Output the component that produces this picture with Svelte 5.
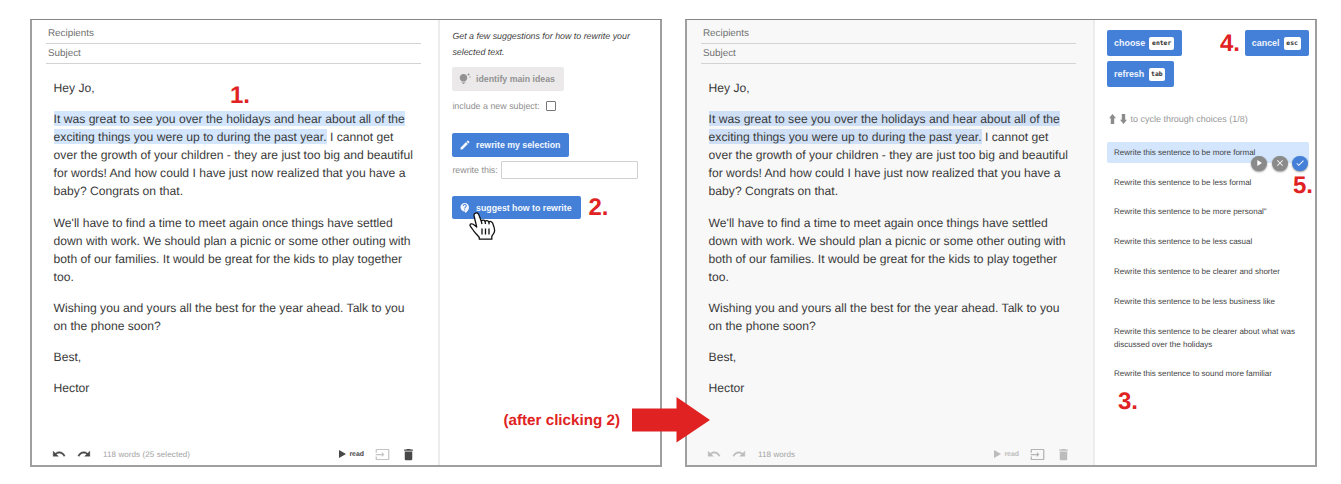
<script>
  const icons = {
    undo: 'M12.5 8c-2.65 0-5.05.99-6.9 2.6L2 7v9h9l-3.62-3.62c1.39-1.16 3.16-1.88 5.12-1.88 3.54 0 6.55 2.31 7.6 5.5l2.37-.78C21.08 11.03 17.15 8 12.5 8z',
    redo: 'M18.4 10.6C16.55 8.99 14.15 8 11.5 8c-4.65 0-8.58 3.03-9.96 7.22L3.9 16c1.05-3.19 4.05-5.5 7.6-5.5 1.95 0 3.73.72 5.12 1.88L13 16h9V7l-3.6 3.6z',
    input: 'M21 3.01H3c-1.1 0-2 .9-2 2V9h2V4.99h18v14.03H3V15H1v4.01c0 1.1.9 1.98 2 1.98h18c1.1 0 2-.88 2-1.98v-14c0-1.11-.9-2-2-2zM11 16l4-4-4-4v3H1v2h10v3z',
    trash: 'M6 19c0 1.1.9 2 2 2h8c1.1 0 2-.9 2-2V7H6v12zM19 4h-3.5l-1-1h-5l-1 1H5v2h14V4z',
    bulb: 'M7 20h4c0 1.1-.9 2-2 2s-2-.9-2-2zm-2-1h8v-2H5v2zm11.500-9.500c0 3.820-2.660 5.860-3.770 6.500H5.270c-1.110-.640-3.770-2.680-3.770-6.500C1.500 5.360 4.860 2 9 2s7.500 3.360 7.500 7.500zm4.870-2.130L20 8l1.370.63L22 10l.63-1.370L24 8l-1.370-.63L22 6l-.63 1.370zM19 6l.94-2.060L22 3l-2.060-.94L19 0l-.94 2.060L16 3l2.060.94L19 6z',
    edit: 'M3 17.250V21h3.750L17.810 9.940l-3.750-3.750L3 17.250zM20.710 7.040c.39-.39.39-1.020 0-1.410l-2.340-2.340c-.39-.39-1.020-.39-1.410 0l-1.830 1.830 3.750 3.750 1.830-1.830z',
    help: 'M11.5 2C6.810 2 3 5.810 3 10.500S6.810 19 11.500 19h.5v3c4.860-2.340 8-7 8-11.500C20 5.810 16.190 2 11.500 2zm1 14.500h-2v-2h2v2zm0-3.500h-2c0-3.250 3-3 3-5 0-1.100-.9-2-2-2s-2 .9-2 2h-2c0-2.210 1.790-4 4-4s4 1.790 4 4c0 2.500-3 2.750-3 5z',
    play: 'M8 5v14l11-7z',
    close: 'M19 6.410L17.590 5 12 10.590 6.410 5 5 6.410 10.590 12 5 17.590 6.410 19 12 13.410 17.590 19 19 17.590 13.410 12z',
    check: 'M9 16.170L4.830 12l-1.420 1.410L9 19 21 7l-1.410-1.410z',
  };

  const paragraphs = [
    ["We'll have to find a time to meet again once things have settled", 'down with work. We should plan a picnic or some other outing with', 'both of our families. It would be great for the kids to play together', 'too.'],
    ['Wishing you and yours all the best for the year ahead. Talk to you', 'on the phone soon?'],
    ['Best,'],
    ['Hector'],
  ];

  const choices = [
    ['Rewrite this sentence to be more formal'],
    ['Rewrite this sentence to be less formal'],
    ['Rewrite this sentence to be more personal"'],
    ['Rewrite this sentence to be less casual'],
    ['Rewrite this sentence to be clearer and shorter'],
    ['Rewrite this sentence to be less business like'],
    ['Rewrite this sentence to be clearer about what was', 'discussed over the holidays'],
    ['Rewrite this sentence to sound more familiar'],
  ];
</script>

{#snippet icon(name, cls)}
  <svg class="icon {cls}" viewBox="0 0 24 24"><path d={icons[name]} /></svg>
{/snippet}

{#snippet editor(locked)}
  <section class="editor" class:locked>
    <div class="field">Recipients</div>
    <div class="field">Subject</div>
    <div class="letter">
      <p>Hey Jo,</p>
      <p>
        <mark>It was great to see you over the holidays and hear about all of the</mark><br />
        <mark>exciting things you were up to during the past year.</mark> I cannot get<br />
        over the growth of your children - they are just too big and beautiful<br />
        for words! And how could I have just now realized that you have a<br />
        baby? Congrats on that.
      </p>
      {#each paragraphs as lines}
        <p>{#each lines as line}<span class="line">{line}</span>{/each}</p>
      {/each}
    </div>
    <footer>
      {@render icon('undo', 'undo')}
      {@render icon('redo', 'redo')}
      <span class="count">{locked ? '118 words' : '118 words (25 selected)'}</span>
      <svg class="tri" viewBox="0 0 7 8"><path d="M0 0L7 4L0 8z" /></svg>
      <span class="read">read</span>
      {@render icon('input', 'insert')}
      {@render icon('trash', 'trash')}
    </footer>
  </section>
{/snippet}

<main>
  <div class="window">
    {@render editor(false)}
    <aside class="tools">
      <p class="hint">Get a few suggestions for how to rewrite your<br />selected text.</p>
      <button class="btn off">{@render icon('bulb', 'lead')}identify main ideas</button>
      <label class="row subject">include a new subject:<span class="box"></span></label>
      <button class="btn edit">{@render icon('edit', 'lead')}rewrite my selection</button>
      <label class="row this">rewrite this:<span class="input"></span></label>
      <button class="btn suggest">{@render icon('help', 'lead')}suggest how to rewrite</button>
    </aside>
  </div>

  <div class="window second">
    {@render editor(true)}
    <aside class="picker">
      <div class="keys">
        <button class="key">choose<kbd>enter</kbd></button>
        <button class="key">cancel<kbd>esc</kbd></button>
      </div>
      <div class="keys"><button class="key">refresh<kbd>tab</kbd></button></div>
      <div class="cycle">
        <svg viewBox="0 0 7 10"><path d="M3.500 0L7 4.300H5.200V10H1.800V4.300H0z" /></svg>
        <svg viewBox="0 0 7 10"><path d="M3.500 10L7 5.700H5.200V0H1.800V5.700H0z" /></svg>
        <span>to cycle through choices (1/8)</span>
      </div>
      <ul>
        {#each choices as lines, i}
          <li class:active={i === 0}>
            {#each lines as line}<span class="line">{line}</span>{/each}
            {#if i === 0}
              <div class="actions">
                <i>{@render icon('play', 'small')}</i>
                <i>{@render icon('close', 'small')}</i>
                <i class="ok">{@render icon('check', 'small')}</i>
              </div>
            {/if}
          </li>
        {/each}
      </ul>
    </aside>
  </div>

  <b class="note n1">1.</b>
  <b class="note n2">2.</b>
  <b class="note n3">3.</b>
  <b class="note n4">4.</b>
  <b class="note n5">5.</b>
  <b class="after">(after clicking 2)</b>
  <svg class="arrow" viewBox="0 0 78 46"><path d="M0 11.500H44.500V0L78 23L44.500 45.500V34.500H0z" /></svg>
  <svg class="hand" viewBox="0 0 27 29">
    <path d="M6.500 1.200C8 .5 9.300 1.300 9.800 2.800L12.300 9.200C13.300 7.800 15.300 7.900 16 9.200C17 8.200 19 8.400 19.800 9.900C21 9 23 9.400 23.600 11C24.800 14 25.800 16.500 25.600 19C25.500 21.500 23.300 22.600 22.800 24.500V27.200H10.300V25.500C8.500 23.200 6.500 21.400 4.700 18.800C3.700 17.200 1.900 15.600 1 13.600C.8 12 2.600 11.300 4.200 12.200L7.700 15L5.200 4.500C4.800 3 5.200 1.700 6.500 1.200z" />
    <path d="M12.300 9.200L13 12M16 9.200L16.500 12M19.800 9.900L20.200 12.400M13 16.500V22.500M16.500 16.500V22.500M20 16.500V22.500" />
  </svg>
</main>

<style>
  :global(body) { background: #fff; }
  main { position: relative; display: flex; gap: 23px; box-sizing: border-box; width: 1341px; height: 484px; padding: 19px 0 0 30px; overflow: hidden; font-family: "Liberation Sans", Arial, sans-serif; text-rendering: geometricPrecision; }
  .window { display: flex; box-sizing: border-box; width: 632px; height: 448px; border: 2px solid #9f9f9f; border-top: 1px solid #858585; }
  .icon { display: block; flex: none; fill: currentColor; }
  p { margin: 0; }
  .line { display: block; white-space: nowrap; }

  .editor { display: flex; flex-direction: column; box-sizing: border-box; width: 408px; flex: none; padding: 4px 17px 0 14px; border-right: 2px solid #ececec; color: #484848; }
  .locked { background: #f8f8f8; color: #bcbcbc; }
  .field { box-sizing: border-box; height: 20px; padding-left: 2px; border-bottom: 1px solid #d3d3d3; color: #707070; font-size: 9.850px; line-height: 20px; }
  .letter { display: flex; flex-direction: column; gap: 13.300px; padding: 15px 0 0 7.600px; color: #3a3a3a; font-size: 12.130px; line-height: 18px; white-space: nowrap; }
  mark { padding: 1px 0 0; background: #d3e6fd; color: inherit; }
  .locked mark { background: #cfe0f6; }
  footer { display: flex; align-items: center; height: 14px; margin: auto 0 4px; padding-left: 6px; }
  .undo, .redo { width: 14px; height: 14px; stroke: currentColor; stroke-width: .6; }
  .redo { margin-left: 11px; }
  .count { flex: 1; margin-left: 12px; color: #a2a2a2; font-size: 8px; letter-spacing: .1px; }
  .tri { width: 7px; height: 8px; fill: currentColor; }
  .read { margin-left: 3px; font-size: 6.900px; font-weight: bold; }
  .insert { width: 15px; height: 15px; margin-left: 11px; color: #c4c4c4; }
  .locked .insert { color: #b3b3b3; }
  .trash { width: 15px; height: 15px; margin: 0 5px 0 11px; }

  aside { flex: 1; box-sizing: border-box; min-width: 0; }
  .tools { display: flex; flex-direction: column; align-items: flex-start; padding: 8px 0 0 12.400px; color: #8f8f8f; font-size: 8.900px; }
  .hint { color: #3f3f3f; font-size: 8.850px; font-style: italic; line-height: 16px; white-space: nowrap; }
  .btn { display: flex; align-items: center; box-sizing: border-box; height: 24px; padding: 0 9px 0 7px; border: 0; border-radius: 2px; background: #4480d8; color: #f4f8fe; font: bold 8.780px "Liberation Sans", Arial, sans-serif; white-space: nowrap; }
  .off { margin-top: 7px; background: #ebe9e9; color: #929292; }
  .lead { width: 12px; height: 12px; margin-right: 4.700px; }
  .row { display: flex; align-items: center; white-space: nowrap; }
  .subject { height: 12px; margin-top: 9px; }
  .box { box-sizing: border-box; width: 10px; height: 10px; margin-left: 6px; border: 1px solid #777; border-radius: 1px; }
  .edit { margin-top: 21px; }
  .this { height: 18px; margin-top: 4px; }
  .input { box-sizing: border-box; width: 137px; height: 18px; margin-left: 3px; border: 1px solid #d0d0d0; border-radius: 1px; }
  .suggest { height: 23px; margin-top: 17px; }

  .picker { padding: 10px 6px 0 12px; }
  .keys { display: flex; justify-content: space-between; height: 26px; margin-bottom: 5px; }
  .key { display: flex; align-items: center; height: 26px; padding: 0 8.500px 0 7px; border: 0; border-radius: 2px; background: #4480d8; color: #eef4fe; font: bold 8.950px "Liberation Sans", Arial, sans-serif; }
  kbd { height: 13px; margin-left: 4.200px; padding: 0 2.600px; border-radius: 2px; background: #fff; color: #2d2d2d; font: bold 6.400px/12px "DejaVu Sans Mono", monospace; }
  .cycle { display: flex; align-items: center; height: 12px; margin: 25.500px 0 17px 2px; color: #979797; font-size: 8.980px; }
  .cycle svg { width: 7px; height: 10px; margin-right: 4px; fill: #8b8b8b; }
  .cycle span { margin-left: -.5px; }
  ul { display: flex; flex-direction: column; gap: 8px; margin: 0; padding: 0; list-style: none; color: #3f3f3f; font-size: 8px; line-height: 13px; }
  li { position: relative; padding: 4.400px 7px; border-radius: 2px; }
  .active { background: #d3e6fd; }
  .actions { position: absolute; top: 14px; right: 1px; display: flex; gap: 4.600px; }
  .actions i { display: grid; place-items: center; width: 15.800px; height: 15.800px; border-radius: 50%; background: #8a8a8a; color: #fff; box-shadow: 0 1px 2px #0006; }
  .actions .ok { background: #4480d8; }
  .small { width: 10px; height: 10px; }

  .note, .after { position: absolute; color: #e02222; white-space: nowrap; line-height: 24px; }
  .note { font-size: 24px; }
  .n1 { left: 230px; top: 84px; }
  .n2 { left: 588.500px; top: 196px; }
  .n3 { left: 1118px; top: 390px; }
  .n4 { left: 1220px; top: 32px; }
  .n5 { left: 1293px; top: 174px; }
  .after { left: 503.500px; top: 409px; font-size: 15.200px; }
  .arrow { position: absolute; left: 631.500px; top: 397px; width: 78px; height: 46px; fill: #e02222; }
  .hand { position: absolute; left: 469px; top: 212px; width: 27px; height: 29px; fill: #fff; stroke: #111; stroke-width: 1.300; stroke-linejoin: round; }
</style>
